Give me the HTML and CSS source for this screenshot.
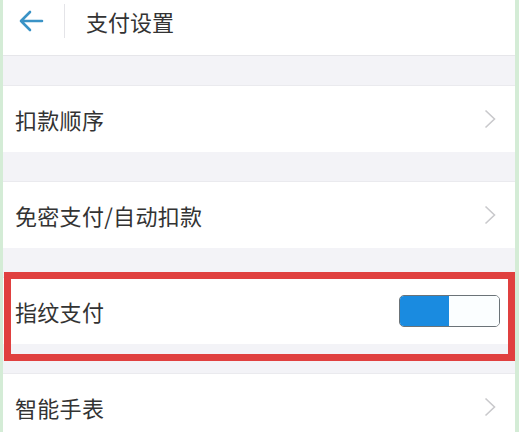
FILE: index.html
```html
<!DOCTYPE html>
<html lang="zh">
<head>
<meta charset="utf-8">
<link rel="stylesheet" href="styles.css">
</head>
<body>
<div class="page">
  <header class="header">
    <span class="back">
      <svg width="26" height="22" viewBox="0 0 26 22"><path d="M24 11H3M12 2L3 11l9 9" fill="none" stroke="#3a93c6" stroke-width="2.6" stroke-linecap="round" stroke-linejoin="round"/></svg>
    </span>
    <span class="divider"></span>
    <span class="title">支付设置</span>
  </header>
  <div class="gap"></div>
  <div class="row"><span class="label">扣款顺序</span><span class="chev"><svg width="12" height="20" viewBox="0 0 12 20"><path d="M1.5 1.5L10.5 10 1.5 18.5" fill="none" stroke="#c9c9cc" stroke-width="1.6"/></svg></span></div>
  <div class="gap"></div>
  <div class="row"><span class="label">免密支付/自动扣款</span><span class="chev"><svg width="12" height="20" viewBox="0 0 12 20"><path d="M1.5 1.5L10.5 10 1.5 18.5" fill="none" stroke="#c9c9cc" stroke-width="1.6"/></svg></span></div>
  <div class="gap"></div>
  <div class="row row-mark"><span class="label">指纹支付</span><span class="toggle"><span class="on"></span><span class="off"></span></span><span class="mark"></span></div>
  <div class="gap"></div>
  <div class="row"><span class="label">智能手表</span><span class="chev"><svg width="12" height="20" viewBox="0 0 12 20"><path d="M1.5 1.5L10.5 10 1.5 18.5" fill="none" stroke="#c9c9cc" stroke-width="1.6"/></svg></span></div>
</div>
</body>
</html>
```
FILE: styles.css
```css
html, body { margin: 0; padding: 0; background: #fff; }
body { font-family: "Noto Sans CJK SC", "Noto Sans", sans-serif; color: #333; }
.page {
  width: 512px; height: 432px; overflow: hidden;
  border-left: 3px solid #d4ecd6; border-right: 4px solid #d4ecd6;
  display: flex; flex-direction: column; background: #f3f3f7;
}
.header {
  flex: 0 0 41px; padding-bottom: 14px; background: #fff; border-bottom: 1px solid #e6e6ea;
  display: flex; align-items: center;
}
.back { width: 26px; height: 22px; margin-left: 15px; display: flex; }
.divider { width: 1px; height: 34px; background: #e4e4e8; margin-left: 20px; }
.title { font-size: 22px; margin-left: 21px; color: #333; }
.gap { flex: 0 0 29px; border-bottom: 1px solid #eaeaee; }
.row {
  flex: 0 0 66px; background: #fff; display: flex; align-items: center;
  justify-content: space-between; padding: 0 19px 0 12px;
}
.label { font-size: 22px; color: #333; letter-spacing: 0.3px; }
.chev { display: flex; }
.row-mark { position: relative; padding-right: 15px; }
.toggle {
  width: 101px; height: 32px; display: flex; border-radius: 5px; overflow: hidden;
  box-sizing: border-box; border: 1.5px solid #6b7378; background: #fff;
}
.toggle .on { flex: 0 0 49px; background: #1a8be0; }
.toggle .off { flex: 1; background: #fbfeff; }
.mark {
  position: absolute; left: 1px; right: 0; top: -6px; bottom: -17px;
  border: 7px solid #e0403f; pointer-events: none;
}
```
